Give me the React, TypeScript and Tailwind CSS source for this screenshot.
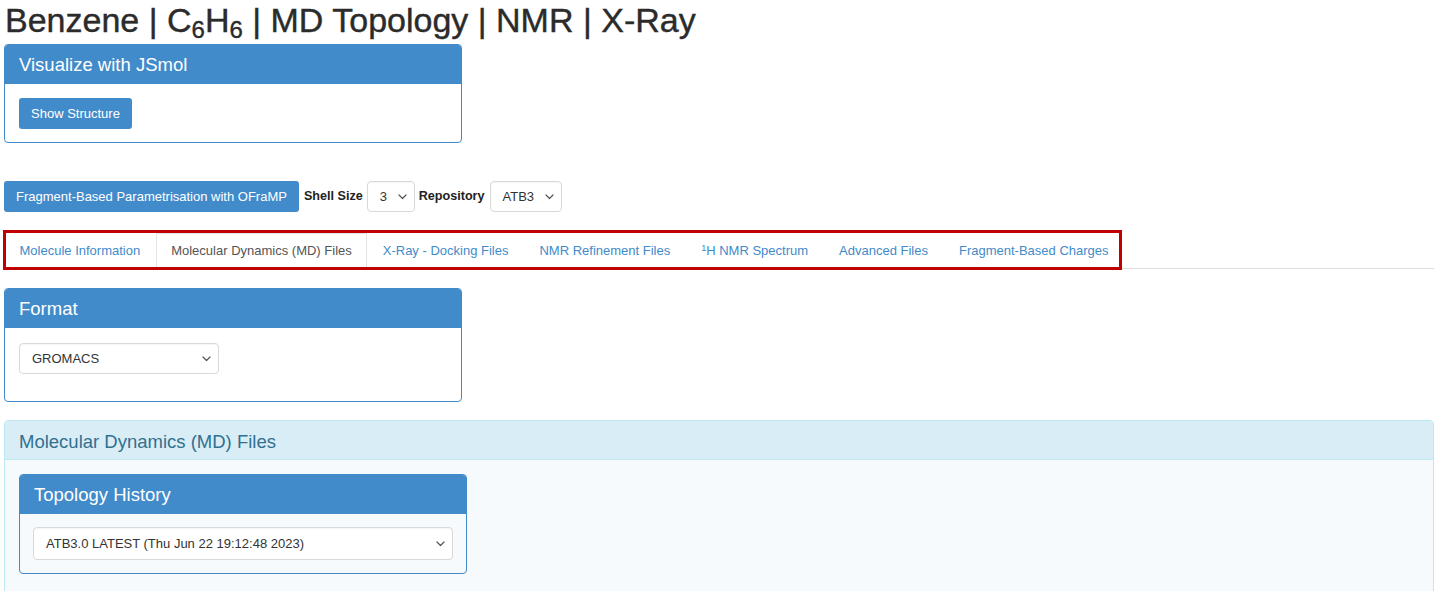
import React from 'react';

const font = "font-['Liberation_Sans',Arial,Helvetica,sans-serif]";

function Chevron({ className = '' }: { className?: string }) {
  return (
    <svg width="9" height="6" viewBox="0 0 9 6" className={className} fill="none">
      <path d="M1 1l3.5 3.5L8 1" stroke="#555" strokeWidth="1.2" strokeLinecap="round" strokeLinejoin="round" />
    </svg>
  );
}

function FakeSelect({ value, className = '' }: { value: string; className?: string }) {
  return (
    <div
      className={`flex items-center justify-between rounded-[4px] border border-[#d9d9d9] bg-white pl-[12px] pr-[7px] text-[13px] text-[#333] shadow-[inset_0_1px_1px_rgba(0,0,0,0.04)] ${className}`}
    >
      <span>{value}</span>
      <Chevron />
    </div>
  );
}

function BluePanel({ title, children, className = '' }: { title: string; children: React.ReactNode; className?: string }) {
  return (
    <div className={`rounded-[4px] border border-[#428bca] ${className}`}>
      <div className="h-[39px] rounded-t-[3px] bg-[#428bca] px-[14px] text-[18.5px] leading-[39px] text-white">{title}</div>
      {children}
    </div>
  );
}

const tabs = [
  { label: 'Molecule Information' },
  { label: 'Molecular Dynamics (MD) Files', active: true },
  { label: 'X-Ray - Docking Files' },
  { label: 'NMR Refinement Files' },
  { label: 'H NMR Spectrum', sup: '1' },
  { label: 'Advanced Files' },
  { label: 'Fragment-Based Charges' },
];

export default function App() {
  return (
    <div className={`${font} min-h-[591px] overflow-hidden bg-white pl-[4px] pr-[6px] text-[#333]`}>
      <h1 className="ml-[1px] h-[44px] text-[34px] leading-[40px] text-[#2b2b2b] [-webkit-text-stroke:0.4px_#2b2b2b]">
        Benzene | C<sub className="text-[24px]">6</sub>H<sub className="text-[24px]">6</sub> | MD Topology | NMR | X-Ray
      </h1>

      <BluePanel title="Visualize with JSmol" className="w-[458px]">
        <div className="px-[14px] pt-[14px] pb-[13px]">
          <button className="h-[31px] rounded-[3px] bg-[#428bca] px-[12px] text-[13px] text-white">Show Structure</button>
        </div>
      </BluePanel>

      <div className="mt-[38px] flex items-center gap-[4px]">
        <button className="h-[31px] rounded-[3px] bg-[#428bca] px-[12px] text-[13px] text-white">
          Fragment-Based Parametrisation with OFraMP
        </button>
        <span className="ml-[1px] text-[12.6px] font-bold text-[#222]">Shell Size</span>
        <FakeSelect value="3" className="h-[31px] w-[48px]" />
        <span className="text-[12.6px] font-bold text-[#222]">Repository</span>
        <FakeSelect value="ATB3" className="ml-[1px] h-[31px] w-[72px]" />
      </div>

      <div className="relative mt-[18px] border-b border-[#ddd] pt-[3px]">
        <ul className="flex">
          {tabs.map((t) => (
            <li
              key={t.label}
              className={`mb-[-1px] h-[36px] border px-[14.5px] text-[13px] leading-[34px] ${
                t.active
                  ? 'border-x-[#e3e3e3] border-t-[#e3e3e3] border-b-white bg-white text-[#555]'
                  : 'border-transparent text-[#428bca]'
              }`}
            >
              {t.sup && <sup className="text-[9px]">{t.sup}</sup>}
              {t.label}
            </li>
          ))}
        </ul>
        <div className="pointer-events-none absolute left-[-1px] top-0 h-[40px] w-[1119px] border-[3px] border-[#c00000]" />
      </div>

      <BluePanel title="Format" className="mt-[19px] w-[458px]">
        <div className="px-[14px] pt-[15px] pb-[27px]">
          <FakeSelect value="GROMACS" className="h-[31px] w-[200px]" />
        </div>
      </BluePanel>

      <div className="mt-[18px] h-[200px] rounded-[4px] border border-[#bce8f1] bg-[#f6fafc]">
        <div className="h-[39px] rounded-t-[3px] border-b border-[#bce8f1] bg-[#d9edf7] px-[14px] text-[18.5px] leading-[41px] text-[#31708f]">
          Molecular Dynamics (MD) Files
        </div>
        <div className="px-[14px] pt-[14px]">
          <BluePanel title="Topology History" className="w-[448px]">
            <div className="px-[13px] pt-[13px] pb-[13px]">
              <FakeSelect value="ATB3.0 LATEST (Thu Jun 22 19:12:48 2023)" className="h-[33px] w-[420px]" />
            </div>
          </BluePanel>
        </div>
      </div>
    </div>
  );
}
